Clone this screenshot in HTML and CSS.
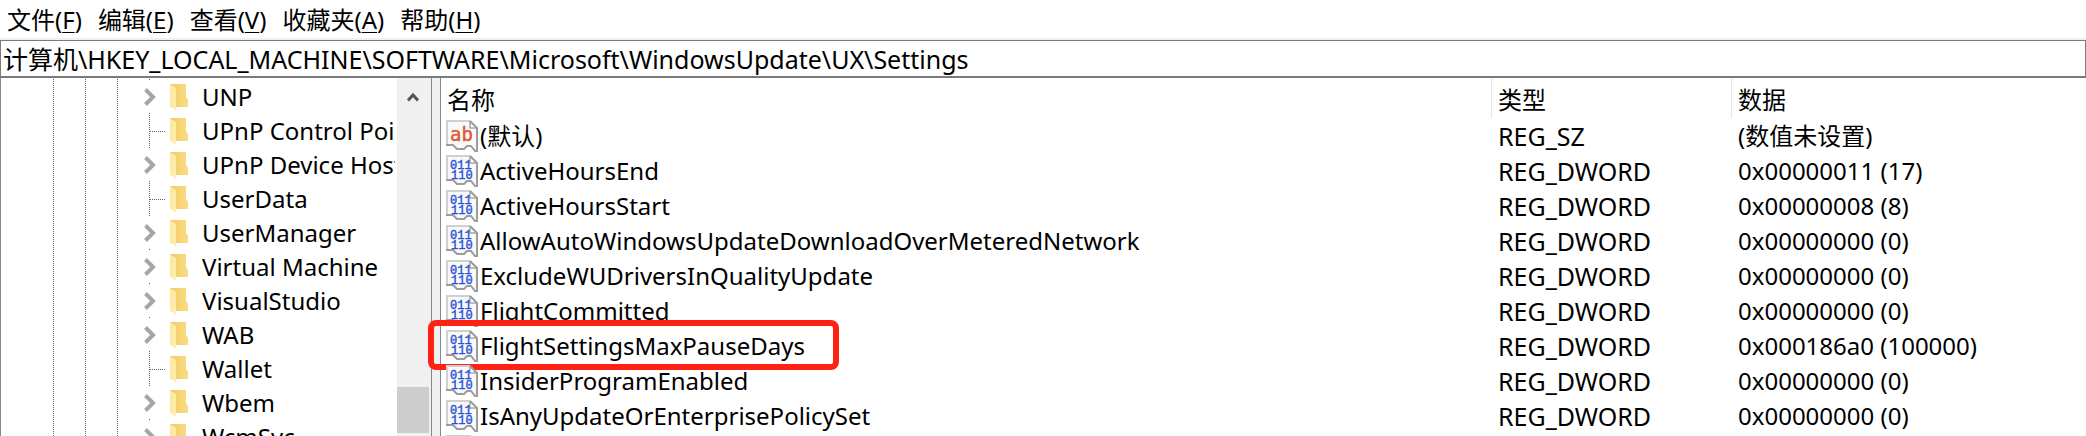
FILE: index.html
```
<!DOCTYPE html>
<html lang="zh-CN">
<head>
<meta charset="utf-8">
<title>注册表编辑器</title>
<link rel="stylesheet" href="styles.css">
</head>
<body>
<svg class="defs" aria-hidden="true">
  <defs>
    <linearGradient id="back" x1="0" y1="0" x2="1" y2="0"><stop offset="0" stop-color="#efca66"/><stop offset="1" stop-color="#fadc82"/></linearGradient>
    <linearGradient id="front" x1="0" y1="0" x2="1" y2="1"><stop offset="0" stop-color="#ffe596"/><stop offset="1" stop-color="#ffefb6"/></linearGradient>
    <symbol id="folder" viewBox="0 0 20 28">
      <path d="M0 1H16V14L18 17V24H0Z" fill="url(#back)"/>
      <path d="M0 1L6 5V28L0 23Z" fill="url(#front)"/>
    </symbol>
    <symbol id="chevron" viewBox="0 0 12 18">
      <path d="M1.500 1.500L9 9L1.500 16.500" fill="none" stroke="#a6a6a6" stroke-width="4"/>
    </symbol>
    <symbol id="sheet" viewBox="0 0 32 32">
      <path d="M1 1H24L31 8V31L28 30L25 26H20L17 29H12L9 27L6 25H1Z" fill="#f9f9f9"/>
      <path d="M1 25V1H24" fill="none" stroke="#d0d0d0" stroke-width="2"/>
      <path d="M24 1V8H31" fill="#fff" stroke="#a6a6a6" stroke-width="1.500"/>
      <path d="M24 1L31 8V31H29L25 26H21L18 29H11L7 25H0" fill="none" stroke="#9c9c9c" stroke-width="2"/>
    </symbol>
    <symbol id="string" viewBox="0 0 32 32">
      <use href="#sheet"/>
      <text x="4" y="21" class="glyph-string">ab</text>
    </symbol>
    <symbol id="binary" viewBox="0 0 32 32">
      <use href="#sheet"/>
      <text x="4" y="14" class="glyph-binary">011</text>
      <text x="5" y="24" class="glyph-binary">110</text>
    </symbol>
  </defs>
</svg>
<div class="window">
  <nav class="menu">
    <button type="button">文件(<u>F</u>)</button>
    <button type="button">编辑(<u>E</u>)</button>
    <button type="button">查看(<u>V</u>)</button>
    <button type="button">收藏夹(<u>A</u>)</button>
    <button type="button">帮助(<u>H</u>)</button>
  </nav>
  <input class="address" type="text" aria-label="地址" value="计算机\HKEY_LOCAL_MACHINE\SOFTWARE\Microsoft\WindowsUpdate\UX\Settings">
  <main class="panes">
    <section class="tree-pane">
      <ul class="tree">
        <li class="node"><button class="toggle" type="button" aria-label="展开 UNP"><svg><use href="#chevron"/></svg></button><svg class="folder"><use href="#folder"/></svg><span>UNP</span></li>
        <li class="node leaf"><i class="branch"></i><svg class="folder"><use href="#folder"/></svg><span>UPnP Control Point</span></li>
        <li class="node"><button class="toggle" type="button" aria-label="展开 UPnP Device Host"><svg><use href="#chevron"/></svg></button><svg class="folder"><use href="#folder"/></svg><span>UPnP Device Host</span></li>
        <li class="node leaf"><i class="branch"></i><svg class="folder"><use href="#folder"/></svg><span>UserData</span></li>
        <li class="node"><button class="toggle" type="button" aria-label="展开 UserManager"><svg><use href="#chevron"/></svg></button><svg class="folder"><use href="#folder"/></svg><span>UserManager</span></li>
        <li class="node"><button class="toggle" type="button" aria-label="展开 Virtual Machine"><svg><use href="#chevron"/></svg></button><svg class="folder"><use href="#folder"/></svg><span>Virtual Machine</span></li>
        <li class="node"><button class="toggle" type="button" aria-label="展开 VisualStudio"><svg><use href="#chevron"/></svg></button><svg class="folder"><use href="#folder"/></svg><span>VisualStudio</span></li>
        <li class="node"><button class="toggle" type="button" aria-label="展开 WAB"><svg><use href="#chevron"/></svg></button><svg class="folder"><use href="#folder"/></svg><span>WAB</span></li>
        <li class="node leaf"><i class="branch"></i><svg class="folder"><use href="#folder"/></svg><span>Wallet</span></li>
        <li class="node"><button class="toggle" type="button" aria-label="展开 Wbem"><svg><use href="#chevron"/></svg></button><svg class="folder"><use href="#folder"/></svg><span>Wbem</span></li>
        <li class="node"><button class="toggle" type="button" aria-label="展开 WcmSvc"><svg><use href="#chevron"/></svg></button><svg class="folder"><use href="#folder"/></svg><span>WcmSvc</span></li>
      </ul>
      <div class="scrollbar">
        <button class="scroll-up" type="button" aria-label="向上滚动"><svg viewBox="0 0 12 10"><path d="M1 8.500L6 3L11 8.500" fill="none" stroke="#555" stroke-width="3"/></svg></button>
        <div class="thumb"></div>
      </div>
    </section>
    <section class="value-pane">
      <table class="values">
        <colgroup><col class="col-name"><col class="col-type"><col></colgroup>
        <thead><tr><th>名称</th><th>类型</th><th>数据</th></tr></thead>
        <tbody>
          <tr><td><div class="name"><svg><use href="#string"/></svg><span>(默认)</span></div></td><td class="type">REG_SZ</td><td>(数值未设置)</td></tr>
          <tr><td><div class="name"><svg><use href="#binary"/></svg><span>ActiveHoursEnd</span></div></td><td class="type">REG_DWORD</td><td>0x00000011 (17)</td></tr>
          <tr><td><div class="name"><svg><use href="#binary"/></svg><span>ActiveHoursStart</span></div></td><td class="type">REG_DWORD</td><td>0x00000008 (8)</td></tr>
          <tr><td><div class="name"><svg><use href="#binary"/></svg><span>AllowAutoWindowsUpdateDownloadOverMeteredNetwork</span></div></td><td class="type">REG_DWORD</td><td>0x00000000 (0)</td></tr>
          <tr><td><div class="name"><svg><use href="#binary"/></svg><span>ExcludeWUDriversInQualityUpdate</span></div></td><td class="type">REG_DWORD</td><td>0x00000000 (0)</td></tr>
          <tr><td><div class="name"><svg><use href="#binary"/></svg><span>FlightCommitted</span></div></td><td class="type">REG_DWORD</td><td>0x00000000 (0)</td></tr>
          <tr><td><div class="name marked"><svg><use href="#binary"/></svg><span>FlightSettingsMaxPauseDays</span></div></td><td class="type">REG_DWORD</td><td>0x000186a0 (100000)</td></tr>
          <tr><td><div class="name"><svg><use href="#binary"/></svg><span>InsiderProgramEnabled</span></div></td><td class="type">REG_DWORD</td><td>0x00000000 (0)</td></tr>
          <tr><td><div class="name"><svg><use href="#binary"/></svg><span>IsAnyUpdateOrEnterprisePolicySet</span></div></td><td class="type">REG_DWORD</td><td>0x00000000 (0)</td></tr>
          <tr><td><div class="name"><svg><use href="#binary"/></svg></div></td><td></td><td></td></tr>
        </tbody>
      </table>
    </section>
  </main>
</div>
</body>
</html>
```
FILE: styles.css
```
* { box-sizing: border-box; }
body {
  margin: 0;
  background: #fff;
  color: #000;
}
body, button, input {
  font-family: "Noto Sans", "Noto Sans CJK SC", sans-serif;
  font-size: 24px;
  line-height: 34px;
}
button {
  padding: 0;
  border: 0;
  background: none;
  color: inherit;
}
.defs { position: absolute; width: 0; height: 0; }
.window {
  display: flex;
  flex-direction: column;
  height: 100vh;
  overflow: hidden;
}
.menu {
  display: flex;
  flex: none;
  gap: 16px;
  padding: 3px 7px 1px;
  border-bottom: 2px solid #f0f0f0;
}
.menu u { text-decoration-thickness: 1px; text-underline-offset: 3px; }
.address {
  flex: none;
  width: 100%;
  height: 38px;
  padding: 0 2px 2px;
  border: 1px solid #7a7a7a;
  border-bottom-width: 2px;
  background: #fff;
  color: #000;
  font-size: 25px;
  outline: 0;
}
.panes {
  display: flex;
  flex: 1;
  min-height: 0;
  background: #f0f0f0;
}
.tree-pane {
  display: flex;
  flex: none;
  width: 432px;
  overflow: hidden;
  border: 1px solid #828790;
  border-width: 0 1px;
  background: #fff;
}
.tree {
  flex: 1;
  min-width: 0;
  margin: 0;
  padding: 2px 0 0;
  list-style: none;
  overflow: hidden;
  background-image:
    repeating-linear-gradient(transparent 0 1px, #666 1px 2px),
    repeating-linear-gradient(transparent 0 1px, #666 1px 2px),
    repeating-linear-gradient(transparent 0 1px, #666 1px 2px),
    repeating-linear-gradient(transparent 0 1px, #666 1px 2px);
  background-size: 1px 100%;
  background-position: 52px 0, 84px 0, 116px 0, 148px 0;
  background-repeat: no-repeat;
}
.node {
  display: grid;
  grid-template-columns: 27px 32px 1fr;
  align-items: center;
  height: 34px;
  padding-left: 142px;
  white-space: nowrap;
}
.node span { min-width: 0; margin-right: 2px; overflow: hidden; }
.toggle {
  display: flex;
  align-items: center;
  height: 33px;
  align-self: start;
  width: 15px;
  background: #fff;
}
.toggle svg { width: 12px; height: 18px; margin-left: 1px; }
.branch {
  width: 15px;
  height: 1px;
  margin-left: 7px;
  background: repeating-linear-gradient(90deg, #666 0 1px, transparent 1px 2px);
}
.folder { width: 20px; height: 28px; }
.scrollbar {
  flex: none;
  display: flex;
  flex-direction: column;
  justify-content: space-between;
  width: 34px;
  padding-bottom: 3px;
  background: #f0f0f0;
}
.scroll-up {
  display: grid;
  place-items: center;
  width: 32px;
  height: 38px;
}
.scroll-up svg { width: 12px; height: 10px; }
.thumb { height: 46px; margin-right: 2px; background: #cdcdcd; }
.value-pane {
  flex: 1;
  min-width: 0;
  margin-left: 8px;
  border-left: 1px solid #828790;
  background: #fff;
}
.values {
  width: 100%;
  table-layout: fixed;
  border-collapse: separate;
  border-spacing: 0;
}
.col-name { width: 1051px; }
.col-type { width: 240px; }
th, td {
  height: 35px;
  padding: 0 6px;
  text-align: left;
  font-weight: 400;
  white-space: nowrap;
}
th {
  height: 40px;
  padding-top: 3px;
  border-right: 1px solid #e5e5e5;
}
th:last-child { border-right: 0; }
td:first-child { padding-left: 5px; }
.type { font-size: 25px; }
.name {
  position: relative;
  display: flex;
  align-items: center;
  gap: 2px;
  width: max-content;
  height: 35px;
}
.name svg { width: 32px; height: 32px; }
.marked::after {
  content: "";
  position: absolute;
  inset: -8px -34px -7px -18px;
  border: 6px solid #ff2214;
  border-radius: 8px;
}
.glyph-string { font: 19px "DejaVu Sans Mono", monospace; fill: #dc5a38; stroke: #dc5a38; stroke-width: 0.5px; }
.glyph-binary { font: 12px "Liberation Mono", monospace; fill: #2850d8; stroke: #2850d8; stroke-width: 0.4px; }
```
